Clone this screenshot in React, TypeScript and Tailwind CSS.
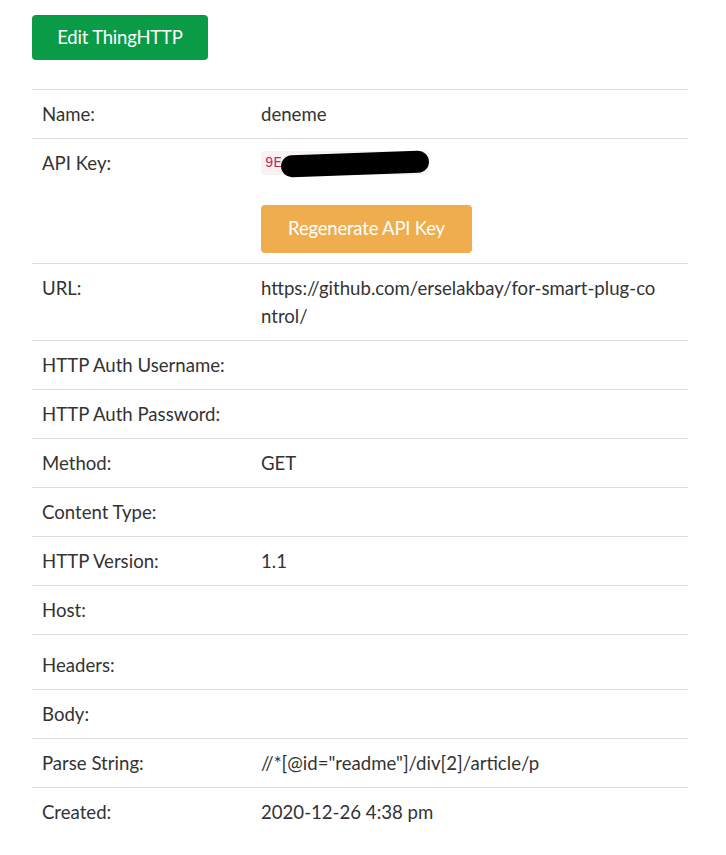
const rows: { label: string; value?: string; tall?: boolean }[] = [
  { label: "URL:", value: "https://github.com/erselakbay/for-smart-plug-control/" },
  { label: "HTTP Auth Username:" },
  { label: "HTTP Auth Password:" },
  { label: "Method:", value: "GET" },
  { label: "Content Type:" },
  { label: "HTTP Version:", value: "1.1" },
  { label: "Host:" },
  { label: "Headers:", tall: true },
  { label: "Body:" },
  { label: "Parse String:", value: '//*[@id="readme"]/div[2]/article/p' },
  { label: "Created:", value: "2020-12-26 4:38 pm" },
];

export default function App() {
  return (
    <div
      className="min-h-screen bg-white px-8 pt-[15px] text-[18.6px] text-[#333]"
      style={{ fontFamily: "Lato, 'Open Sans', sans-serif" }}
    >
      <button className="h-[45px] w-[176px] rounded-[4px] bg-[#0a9b47] text-[18.5px] text-white tracking-[-0.2px]">
        Edit ThingHTTP
      </button>

      <table className="mt-[29px] w-[656px] border-collapse">
        <tbody>
          <tr className="border-t border-[#ddd]">
            <td className="w-[219px] px-[10px] py-[10px] align-top leading-[28px]">Name:</td>
            <td className="px-[10px] py-[10px] align-top leading-[28px]">deneme</td>
          </tr>
          <tr className="border-t border-[#ddd]">
            <td className="px-[10px] py-[10px] align-top leading-[28px]">API Key:</td>
            <td className="px-[10px] py-[10px] align-top">
              <div className="flex h-[28px] items-center">
                <span className="relative inline-flex h-[24px] w-[168px] items-center rounded-[4px] bg-[#f9f2f4] px-[4px] font-['Liberation_Mono',monospace] text-[14px] text-[#c7254e]">
                  9E
                  <span className="absolute left-[20px] top-[2px] h-[22px] w-[148px] -rotate-2 rounded-full bg-black" />
                </span>
              </div>
              <button className="mt-[28px] h-[48px] w-[211px] rounded-[4px] bg-[#f0ad4e] text-[18.5px] text-white tracking-[-0.2px]">
                Regenerate API Key
              </button>
            </td>
          </tr>
          {rows.map((r) => (
            <tr key={r.label} className="border-t border-[#ddd]">
              <td
                className={
                  r.tall
                    ? "px-[10px] pb-[10px] pt-[16px] align-top leading-[28px]"
                    : "px-[10px] py-[10px] align-top leading-[28px]"
                }
              >
                {r.label}
              </td>
              <td
                className={
                  r.tall
                    ? "px-[10px] pb-[10px] pt-[16px] align-top leading-[28px]"
                    : "px-[10px] py-[10px] align-top leading-[28px]"
                }
              >
                <div className="max-w-[398px] break-all">{r.value ?? ""}</div>
              </td>
            </tr>
          ))}
        </tbody>
      </table>
    </div>
  );
}
